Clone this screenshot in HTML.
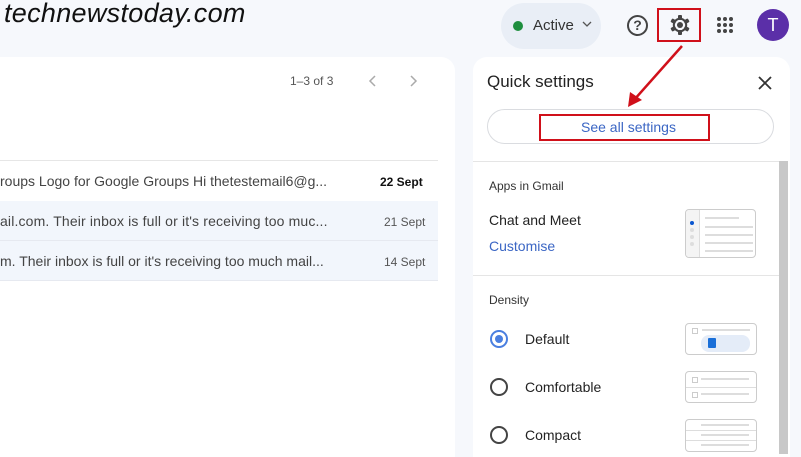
<!DOCTYPE html><html><head><style>
body{margin:0;width:801px;height:454px;background:#f6f8fc;font-family:"Liberation Sans",sans-serif;position:relative;overflow:hidden;color:#1f1f1f}
.a{position:absolute}
</style></head><body>
<div class="a" style="left:4px;top:-2px;font-size:27px;font-style:italic;color:#111;letter-spacing:0.3px">technewstoday.com</div>
<div class="a" style="left:0;top:57px;width:455px;height:400px;background:#fff;border-radius:0 14px 0 0"></div>
<div class="a" style="left:290px;top:74px;font-size:12px;color:#555">1–3 of 3</div>
<svg class="a" style="left:366px;top:74px" width="60" height="14"><path d="M9 2L4 7l5 5M45 2l5 5-5 5" fill="none" stroke="#aaa" stroke-width="1.5"/></svg>
<div class="a" style="left:0;top:160px;width:438px;height:1px;background:#e6e6e6"></div>
<div class="a" style="left:0;top:173px;font-size:14px;color:#444;white-space:nowrap">roups Logo for Google Groups Hi thetestemail6@g...</div>
<div class="a" style="left:380px;top:175px;font-size:12px;font-weight:bold;color:#111">22 Sept</div>
<div class="a" style="left:0;top:201px;width:438px;height:39px;background:#f2f6fc;border-bottom:1px solid #e6e9f0"></div>
<div class="a" style="left:0;top:213px;font-size:14px;color:#444;white-space:nowrap;letter-spacing:0.15px">ail.com. Their inbox is full or it's receiving too muc...</div>
<div class="a" style="left:384px;top:215px;font-size:12px;color:#555">21 Sept</div>
<div class="a" style="left:0;top:241px;width:438px;height:39px;background:#f2f6fc;border-bottom:1px solid #e6e9f0"></div>
<div class="a" style="left:0;top:253px;font-size:14px;color:#444;white-space:nowrap">m. Their inbox is full or it's receiving too much mail...</div>
<div class="a" style="left:384px;top:255px;font-size:12px;color:#555">14 Sept</div>

<div class="a" style="left:501px;top:3px;width:100px;height:46px;border-radius:23px;background:#e9eef6"></div>
<div class="a" style="left:513px;top:21px;width:10px;height:10px;border-radius:50%;background:#1e8e3e"></div>
<div class="a" style="left:533px;top:17px;font-size:15px;color:#333">Active</div>
<svg class="a" style="left:582px;top:20px" width="10" height="8"><path d="M1 2l4 4 4-4" fill="none" stroke="#555" stroke-width="1.3"/></svg>
<div class="a" style="left:627px;top:15px;width:17px;height:17px;border:2px solid #444;border-radius:50%;text-align:center;font-size:14px;line-height:17px;color:#444;font-weight:bold">?</div>
<svg class="a" style="left:669px;top:14px" width="22" height="22" viewBox="0 0 22 22"><g fill="#444" transform="translate(11 11)"><rect x="-2" y="-10" width="4" height="5" rx="1"/><rect x="-2" y="-10" width="4" height="5" rx="1" transform="rotate(60)"/><rect x="-2" y="-10" width="4" height="5" rx="1" transform="rotate(120)"/><rect x="-2" y="-10" width="4" height="5" rx="1" transform="rotate(180)"/><rect x="-2" y="-10" width="4" height="5" rx="1" transform="rotate(240)"/><rect x="-2" y="-10" width="4" height="5" rx="1" transform="rotate(300)"/></g><circle cx="11" cy="11" r="6.2" fill="none" stroke="#444" stroke-width="2"/><circle cx="11" cy="11" r="3" fill="#444"/></svg>
<div class="a" style="left:657px;top:8px;width:44px;height:34px;border:2px solid #d0101a;box-sizing:border-box"></div>
<svg class="a" style="left:716px;top:16px" width="18" height="18"><g fill="#444"><circle cx="3" cy="3" r="2"/><circle cx="9" cy="3" r="2"/><circle cx="15" cy="3" r="2"/><circle cx="3" cy="9" r="2"/><circle cx="9" cy="9" r="2"/><circle cx="15" cy="9" r="2"/><circle cx="3" cy="15" r="2"/><circle cx="9" cy="15" r="2"/><circle cx="15" cy="15" r="2"/></g></svg>
<div class="a" style="left:757px;top:9px;width:32px;height:32px;border-radius:50%;background:#5b2fa8;color:#fff;font-size:18px;text-align:center;line-height:32px">T</div>

<div class="a" style="left:473px;top:57px;width:317px;height:400px;background:#fff;border-radius:14px 14px 0 0"></div>
<div class="a" style="left:487px;top:72px;font-size:17px;color:#222">Quick settings</div>
<svg class="a" style="left:758px;top:76px" width="14" height="14"><path d="M1 1l12 12M13 1L1 13" stroke="#333" stroke-width="1.8"/></svg>
<div class="a" style="left:487px;top:109px;width:287px;height:35px;border:1px solid #dadce0;border-radius:18px;box-sizing:border-box"></div>
<div class="a" style="left:539px;top:114px;width:171px;height:27px;border:2px solid #d0101a;box-sizing:border-box"></div>
<div class="a" style="left:581px;top:119px;font-size:14px;color:#3b66c4">See all settings</div>
<svg class="a" style="left:620px;top:40px" width="70" height="75"><line x1="62" y1="6" x2="14" y2="60" stroke="#d0101a" stroke-width="2.5"/><path d="M8 67L10 52 22 60z" fill="#d0101a"/></svg>
<div class="a" style="left:473px;top:161px;width:306px;height:1px;background:#e5e5e5"></div>
<div class="a" style="left:779px;top:161px;width:9px;height:293px;background:#c8c8c8"></div>
<div class="a" style="left:489px;top:179px;font-size:12px;color:#333">Apps in Gmail</div>
<div class="a" style="left:489px;top:212px;font-size:14px;color:#222">Chat and Meet</div>
<div class="a" style="left:489px;top:238px;font-size:14px;color:#3b66c4">Customise</div>
<div class="a" style="left:685px;top:209px;width:71px;height:49px;border:1px solid #ccc;border-radius:4px;box-sizing:border-box;overflow:hidden">
<div class="a" style="left:0;top:0;width:13px;height:49px;border-right:1px solid #ddd;background:#f4f4f4"></div>
<div class="a" style="left:4px;top:11px;width:4px;height:4px;border-radius:50%;background:#0b57d0"></div>
<div class="a" style="left:4px;top:18px;width:4px;height:4px;border-radius:50%;background:#ddd"></div>
<div class="a" style="left:4px;top:25px;width:4px;height:4px;border-radius:50%;background:#ddd"></div>
<div class="a" style="left:4px;top:32px;width:4px;height:4px;border-radius:50%;background:#ddd"></div>
<div class="a" style="left:19px;top:7px;width:34px;height:2px;background:#ddd"></div>
<div class="a" style="left:19px;top:16px;width:48px;height:2px;background:#ddd"></div>
<div class="a" style="left:19px;top:24px;width:48px;height:2px;background:#ddd"></div>
<div class="a" style="left:19px;top:32px;width:48px;height:2px;background:#ddd"></div>
<div class="a" style="left:19px;top:40px;width:48px;height:2px;background:#ddd"></div></div>
<div class="a" style="left:473px;top:275px;width:306px;height:1px;background:#e5e5e5"></div>
<div class="a" style="left:489px;top:293px;font-size:12px;color:#333">Density</div>
<div class="a" style="left:490px;top:330px;width:14px;height:14px;border:2px solid #4a7fe0;border-radius:50%"></div>
<div class="a" style="left:495px;top:335px;width:8px;height:8px;background:#4a7fe0;border-radius:50%"></div>
<div class="a" style="left:525px;top:331px;font-size:14px;color:#222">Default</div>
<div class="a" style="left:490px;top:378px;width:14px;height:14px;border:2px solid #444;border-radius:50%"></div>
<div class="a" style="left:525px;top:379px;font-size:14px;color:#222">Comfortable</div>
<div class="a" style="left:490px;top:426px;width:14px;height:14px;border:2px solid #444;border-radius:50%"></div>
<div class="a" style="left:525px;top:427px;font-size:14px;color:#222">Compact</div>
<div class="a" style="left:685px;top:323px;width:72px;height:32px;border:1px solid #ccc;border-radius:4px;box-sizing:border-box">
<div class="a" style="left:15px;top:11px;width:49px;height:17px;border-radius:8px;background:#e4ecf8"></div>
<div class="a" style="left:22px;top:14px;width:8px;height:10px;background:#1a6fd8;border-radius:1px"></div>
<div class="a" style="left:6px;top:4px;width:4px;height:4px;border:1px solid #ccc"></div>
<div class="a" style="left:16px;top:5px;width:48px;height:2px;background:#ddd"></div></div>
<div class="a" style="left:685px;top:371px;width:72px;height:32px;border:1px solid #ccc;border-radius:4px;box-sizing:border-box">
<div class="a" style="left:0;top:15px;width:70px;height:1px;background:#ddd"></div>
<div class="a" style="left:6px;top:5px;width:4px;height:4px;border:1px solid #ccc"></div>
<div class="a" style="left:6px;top:20px;width:4px;height:4px;border:1px solid #ccc"></div>
<div class="a" style="left:15px;top:6px;width:48px;height:2px;background:#ddd"></div>
<div class="a" style="left:15px;top:21px;width:48px;height:2px;background:#ddd"></div></div>
<div class="a" style="left:685px;top:419px;width:72px;height:33px;border:1px solid #ccc;border-radius:4px;box-sizing:border-box">
<div class="a" style="left:0;top:10px;width:70px;height:1px;background:#ddd"></div>
<div class="a" style="left:0;top:20px;width:70px;height:1px;background:#ddd"></div>
<div class="a" style="left:15px;top:4px;width:48px;height:2px;background:#ddd"></div>
<div class="a" style="left:15px;top:14px;width:48px;height:2px;background:#ddd"></div>
<div class="a" style="left:15px;top:24px;width:48px;height:2px;background:#ddd"></div></div>
</body></html>
